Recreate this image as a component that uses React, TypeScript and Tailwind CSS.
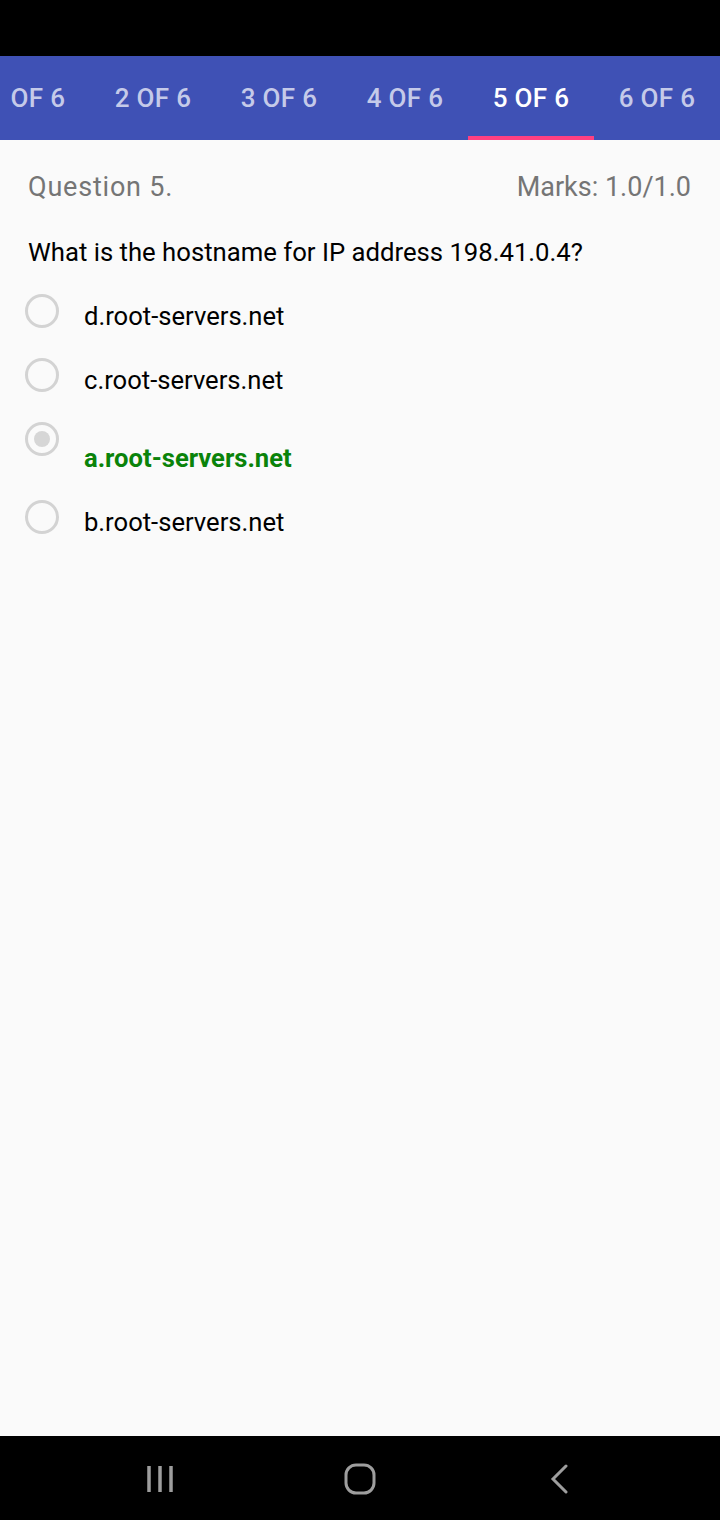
import React from 'react';

const tabs = ['1 OF 6', '2 OF 6', '3 OF 6', '4 OF 6', '5 OF 6', '6 OF 6'];
const activeTab = 4;

type Option = { label: string; selected?: boolean };

const options: Option[] = [
  { label: 'd.root-servers.net' },
  { label: 'c.root-servers.net' },
  { label: 'a.root-servers.net', selected: true },
  { label: 'b.root-servers.net' },
];

const Radio: React.FC<{ checked?: boolean }> = ({ checked }) => (
  <div className="w-[34px] h-[34px] shrink-0 rounded-full border-[3px] border-[#d3d3d3] flex items-center justify-center">
    {checked && <div className="w-[16px] h-[16px] rounded-full bg-[#d6d6d6]" />}
  </div>
);

export default function App() {
  return (
    <div
      className="w-[720px] h-[1520px] flex flex-col bg-[#fafafa] overflow-hidden"
      style={{ fontFamily: 'Roboto, "Noto Sans", sans-serif' }}
    >
      {/* Status bar */}
      <div className="h-[56px] bg-black shrink-0" />

      {/* Tabs */}
      <div className="h-[84px] bg-[#3f51b5] shrink-0 overflow-hidden">
        <div className="flex h-full -ml-[36px]">
          {tabs.map((t, i) => (
            <div
              key={t}
              className="w-[126px] shrink-0 h-full flex flex-col justify-end"
            >
              <div
                className={`flex-1 flex items-center justify-center text-[26px] font-medium tracking-[0.3px] pt-[4px] ${
                  i === activeTab ? 'text-white' : 'text-[#c5cae9]'
                }`}
              >
                {t}
              </div>
              <div className={`h-[4px] ${i === activeTab ? 'bg-[#ff4081]' : ''}`} />
            </div>
          ))}
        </div>
      </div>

      {/* Content */}
      <div className="flex-1 px-[28px] pt-[30px]">
        <div className="flex justify-between items-center text-[#757575] h-[34px]">
          <span className="text-[27px] tracking-[0.8px]">Question 5.</span>
          <span className="text-[27px] mr-[1px]">Marks: 1.0/1.0</span>
        </div>
        <div className="mt-[32px] text-[25.7px] text-black leading-[32px]">
          What is the hostname for IP address 198.41.0.4?
        </div>

        <div className="mt-[26px] -ml-[3px] flex flex-col">
          {options.map((o) => (
            <div
              key={o.label}
              className={`flex items-start ${o.selected ? 'h-[78px]' : 'h-[64px]'}`}
            >
              <Radio checked={o.selected} />
              <div
                className={`ml-[25px] text-[25.6px] leading-[32px] ${
                  o.selected ? 'mt-[20px] font-bold text-[#0a830a]' : 'mt-[6px] text-black'
                }`}
              >
                {o.label}
              </div>
            </div>
          ))}
        </div>
      </div>

      {/* Navigation bar */}
      <div className="h-[84px] bg-black shrink-0 flex items-center px-[60px] pt-[2px]">
        <div className="w-[201px] flex justify-center">
          <svg width="30" height="30" viewBox="0 0 30 30" fill="none" stroke="#9e9e9e" strokeWidth="3.5">
            <line x1="4" y1="2" x2="4" y2="28" />
            <line x1="15" y1="2" x2="15" y2="28" />
            <line x1="26" y1="2" x2="26" y2="28" />
          </svg>
        </div>
        <div className="w-[201px] flex justify-center">
          <svg width="32" height="32" viewBox="0 0 32 32" fill="none" stroke="#9e9e9e" strokeWidth="3">
            <rect x="2" y="2" width="28" height="28" rx="10" />
          </svg>
        </div>
        <div className="w-[201px] flex justify-center">
          <svg width="20" height="30" viewBox="0 0 20 30" fill="none" stroke="#9e9e9e" strokeWidth="3" strokeLinecap="round">
            <polyline points="16,2 3,15 16,28" />
          </svg>
        </div>
      </div>
    </div>
  );
}
